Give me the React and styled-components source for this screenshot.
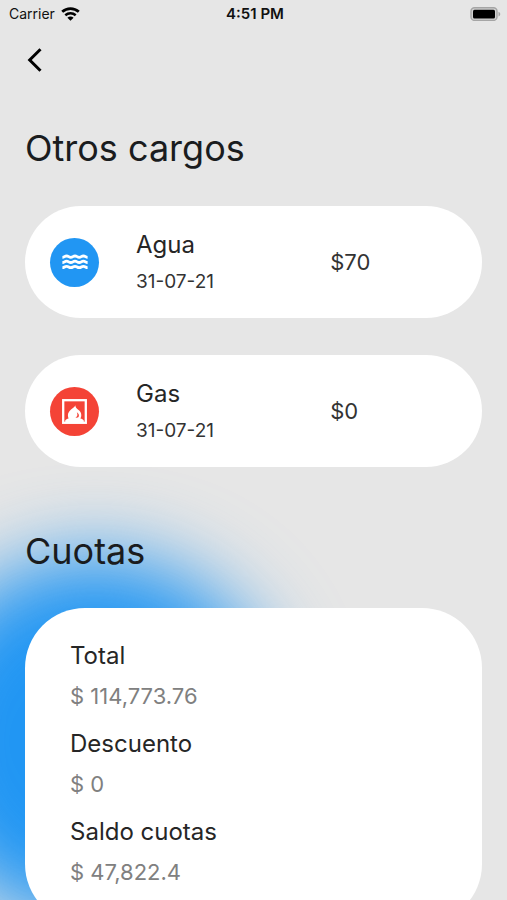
import React from "react";
import styled, { createGlobalStyle } from "styled-components";

const GlobalStyle = createGlobalStyle`
  *, *::before, *::after { box-sizing: border-box; }
  html { scrollbar-width: none; }
  body {
    margin: 0;
    background: #e6e6e6;
    color: #262626;
    font-family: Inter, "Liberation Sans", sans-serif;
  }
  h1, h2, h3, p, dl, dd, ul { margin: 0; padding: 0; }
`;

const Page = styled.div`
  position: relative;
  isolation: isolate;
  overflow: hidden;
  min-height: 100vh;
  padding-bottom: 40px;
`;

const Glow = styled.div`
  position: absolute;
  z-index: -1;
  top: 556px;
  left: -90px;
  width: 370px;
  height: 370px;
  border-radius: 50%;
  background: #2196f3;
  filter: blur(40px);
`;

const StatusBar = styled.header`
  display: grid;
  grid-template-columns: 1fr auto 1fr;
  align-items: center;
  height: 27px;
  padding: 0 6px 0 9px;
  color: #111;
  font-size: 14px;
`;

const Carrier = styled.div`
  display: flex;
  align-items: center;
  gap: 6px;
`;

const Time = styled.time`
  font-size: 15px;
  font-weight: 600;
`;

const Battery = styled.svg`
  justify-self: end;
`;

const Nav = styled.nav`
  display: flex;
  height: 64px;
  padding: 9px 11px;
`;

const BackButton = styled.button`
  display: grid;
  place-items: center;
  width: 48px;
  height: 48px;
  padding: 0;
  border: 0;
  background: none;
  color: #000;
  cursor: pointer;
`;

const Content = styled.main`
  padding: 33px 25px 0;
`;

const Heading = styled.h2`
  font-size: 36px;
  font-weight: 400;
  line-height: 48px;
  color: #1a1c1e;
`;

const ChargeList = styled.ul`
  display: grid;
  gap: 37px;
  margin: 34px 0 60px;
  list-style: none;
`;

const ChargeCard = styled.li`
  display: grid;
  grid-template-columns: 49px 5fr 4fr;
  align-items: center;
  column-gap: 37px;
  height: 112px;
  padding: 0 26px 0 25px;
  border-radius: 56px;
  background: #fff;
`;

const Badge = styled.span`
  display: grid;
  place-items: center;
  width: 49px;
  height: 49px;
  border-radius: 50%;
  background: ${({ $color }) => $color};
  color: #fff;
`;

const ChargeName = styled.h3`
  font-size: 24px;
  font-weight: 400;
  line-height: 40px;
`;

const ChargeDate = styled.p`
  font-size: 19px;
  line-height: 34px;
  color: #333;
`;

const Amount = styled.p`
  font-size: 22px;
  line-height: 32px;
  color: #333;
`;

const FeesCard = styled.dl`
  display: grid;
  gap: 8px;
  margin-top: 33px;
  padding: 28px 45px 32px;
  border-radius: 60px;
  background: #fff;
`;

const FeeLabel = styled.dt`
  font-size: 24px;
  line-height: 40px;
`;

const FeeValue = styled.dd`
  font-size: 22px;
  line-height: 40px;
  color: #808080;
`;

const wave = "c2.1 0 2.1-1.3 4.2-1.3s2.1 1.3 4.2 1.3 2.1-1.3 4.2-1.3 2.1 1.3 4.2 1.3 2.1-1.3 4.2-1.3 2.1 1.3 4.2 1.3";

function WavesIcon() {
  return (
    <svg width="26" height="16" viewBox="0 0 26 16" fill="none" stroke="currentColor" strokeWidth="2.8" aria-hidden="true">
      <path d={`M.4 3.3${wave}M.4 8.5${wave}M.4 13.7${wave}`} />
    </svg>
  );
}

function FireplaceIcon() {
  return (
    <svg width="25" height="25" viewBox="0 0 25 25" aria-hidden="true">
      <rect x="1.2" y="1.2" width="22.600" height="22.600" fill="none" stroke="currentColor" strokeWidth="2.3" />
      <path
        fill="currentColor"
        fillRule="evenodd"
        d="M13.4 6.2C12.6 9 5.9 10.9 5.9 16.300c0 1.400.3 2.400.7 3.300-1.500.3-2.600.9-3.400 2v2h18.600v-2c-.8-1.100-1.900-1.700-3.400-2 .6-1 .9-2.100.9-3.400 0-2.400-1.200-4.300-3.100-5.500-1.700-1.100-2.800-2.500-2.800-4.500zM14.800 13.300c1.400.9 2.100 1.900 2.100 3.100 0 1.300-.9 2.300-2.200 2.300-.5 0-.9-.1-1.300-.4 1.200-.3 2-1.300 2-2.600 0-.9-.2-1.600-.6-2.400z"
      />
    </svg>
  );
}

const charges = [
  { name: "Agua", date: "31-07-21", amount: "$70", color: "#2196f3", Icon: WavesIcon },
  { name: "Gas", date: "31-07-21", amount: "$0", color: "#f44336", Icon: FireplaceIcon },
];

const fees = [
  { label: "Total", value: "$ 114,773.76" },
  { label: "Descuento", value: "$ 0" },
  { label: "Saldo cuotas", value: "$ 47,822.4" },
];

function WifiIcon() {
  return (
    <svg width="19" height="14" viewBox="0 0 19 14" fill="none" stroke="#000" aria-label="Wi-Fi">
      <path d="M1.2 4.8C5.9.6 13.1.6 17.8 4.8" strokeWidth="2.8" />
      <path d="M4.3 8.3C7.3 5.7 11.7 5.7 14.7 8.3" strokeWidth="2.5" />
      <path d="M9.5 13.8 6.4 10.7C8.2 9.2 10.8 9.2 12.6 10.7Z" fill="#000" stroke="none" />
    </svg>
  );
}

function BatteryIcon() {
  return (
    <Battery width="31" height="14" viewBox="0 0 31 14" aria-label="Battery full">
      <rect x="1" y="0.8" width="26" height="12.6" rx="3.5" fill="#d2d2d2" stroke="#a5a5a5" strokeWidth="1.4" />
      <rect x="3" y="2.8" width="22" height="8.6" rx="1.5" fill="#000" />
      <path d="M28.5 4.8c2.3.8 2.3 3.8 0 4.6z" fill="#a5a5a5" />
    </Battery>
  );
}

export default function App() {
  return (
    <Page>
      <GlobalStyle />
      <Glow />
      <StatusBar>
        <Carrier>
          Carrier
          <WifiIcon />
        </Carrier>
        <Time>4:51 PM</Time>
        <BatteryIcon />
      </StatusBar>
      <Nav>
        <BackButton type="button" aria-label="Volver">
          <svg width="24" height="28" viewBox="0 0 24 28" fill="none" stroke="currentColor" strokeWidth="3">
            <path d="M17.5 3.2 6.7 14 17.5 24.8" />
          </svg>
        </BackButton>
      </Nav>
      <Content>
        <Heading>Otros cargos</Heading>
        <ChargeList>
          {charges.map(({ name, date, amount, color, Icon }) => (
            <ChargeCard key={name}>
              <Badge $color={color}>
                <Icon />
              </Badge>
              <div>
                <ChargeName>{name}</ChargeName>
                <ChargeDate>{date}</ChargeDate>
              </div>
              <Amount>{amount}</Amount>
            </ChargeCard>
          ))}
        </ChargeList>
        <Heading>Cuotas</Heading>
        <FeesCard>
          {fees.map(({ label, value }) => (
            <div key={label}>
              <FeeLabel>{label}</FeeLabel>
              <FeeValue>{value}</FeeValue>
            </div>
          ))}
        </FeesCard>
      </Content>
    </Page>
  );
}
